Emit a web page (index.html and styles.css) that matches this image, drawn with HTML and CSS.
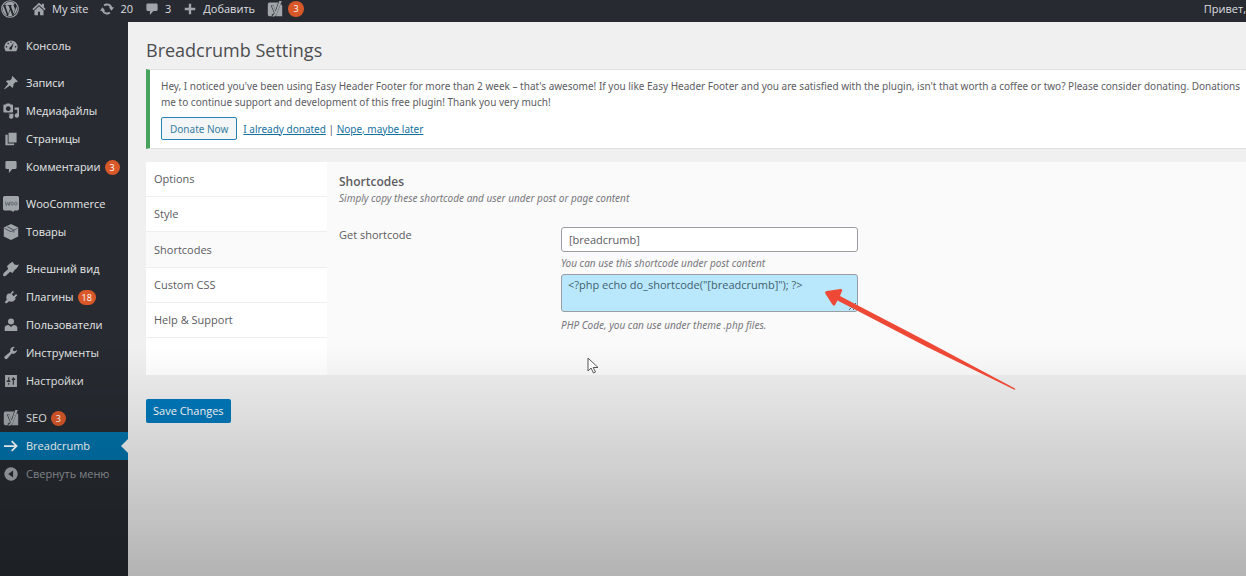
FILE: index.html
```html
<!DOCTYPE html>
<html lang="ru">
<head>
<meta charset="utf-8">
<title>Breadcrumb Settings</title>
<link rel="stylesheet" href="styles.css">
</head>
<body>
<header class="adminbar">
  <a class="bar-item logo" href="#" aria-label="WordPress"><svg class="icon-wp" viewBox="0 0 20 20"><circle cx="10" cy="10" r="9.2" fill="none" stroke="currentColor" stroke-width="1.3"/><path d="M2.600 6.500 6.800 17.500Q2 15 2 10 2 8 2.600 6.500zM3.500 5.200Q6 2 10 2q3.500 0 5.600 2.200-1.800.2-1.600 2 .2 1 1 2.300.8 1.500 0 3.800l-.9 3L11 6.500l1-.1V5.500H7.500v.9l1 .1 1.300 3.500-1.800 5.500L4.900 6.500l1-.1V5.500zM10.200 11l2.500 6.600Q10 18.500 7.800 17.800zM17.200 6.300q2.300 6.700-3.300 10.600l2.500-7.200q.8-2 .8-3.400z"/></svg></a>
  <a class="bar-item site" href="#"><svg class="icon" viewBox="0 0 20 20"><path d="M10 1 .5 10l1.600 1.700L10 4.300l7.900 7.400 1.600-1.700L17 7.600V2.500h-3v2.300z"/><path d="M10 6 3.500 12v7h5v-5h3v5h5v-7z"/></svg>My site</a>
  <a class="bar-item updates" href="#"><svg class="icon" viewBox="0 0 20 20"><path d="M10 2a8 8 0 0 1 7.500 5.500H20l-3.500 5-4-5h1.800A5 5 0 0 0 6.800 6L5 4Q7 2 10 2zM3.500 7.500l4 5H5.700a5 5 0 0 0 7.500 1.500l1.800 2a8 8 0 0 1-12.500-3.500H0z"/></svg>20</a>
  <a class="bar-item comments" href="#"><svg class="icon" viewBox="0 0 20 20"><path d="M4 2h12q2 0 2 2v7q0 2-2 2h-4l-5 5.500V13H4q-2 0-2-2V4q0-2 2-2z"/></svg>3</a>
  <a class="bar-item add" href="#"><svg class="icon" viewBox="0 0 20 20"><path d="M8.300 2.500h3.400v5.800h5.800v3.400h-5.800v5.800H8.300v-5.800H2.500V8.300h5.800z"/></svg>Добавить</a>
  <a class="bar-item seo" href="#" aria-label="SEO"><svg class="icon-yoast" viewBox="0 0 20 20"><path d="M3 2h11l-3.600 10L8 5.500H4.800l4 9.500Q8 16.500 6 17v2H3q-2 0-2-2V4q0-2 2-2zM17 4q2 .5 2 2v13H10.500q1.300-1.500 2-3.500z"/><path d="M15.300 0H18.500L12 16.500Q10.500 20 7 20v-2q2-.5 2.500-3L5.800 6h2.200L10.800 13z"/></svg><span class="badge large">3</span></a>
  <a class="bar-item hello" href="#">Привет,</a>
</header>
<div class="shell">
  <nav class="sidebar">
    <ul class="menu">
      <li><a href="#"><svg class="icon" viewBox="0 0 20 20"><path fill-rule="evenodd" d="M2.500 17.500a9.500 9.500 0 1 1 15 0zM9 3.500h2v2H9zM5 5.500h2v2H5zM2.500 10h2v2h-2zM15.500 10h2v2h-2zM14 5l-5 6.500a2 2 0 1 0 2.500 1.500z"/></svg>Консоль</a></li>
    </ul>
    <ul class="menu">
      <li><a href="#"><svg class="icon" viewBox="0 0 20 20"><path d="m12 0 8 8-2.500 1-1-.3-3 3q.8 3.500-1.500 5.300l-3.500-3.500L1 19l-.7-.7L6 11 2.800 7.500Q5 5.500 8.300 6.500l3-3L11 2z"/></svg>Записи</a></li>
      <li><a href="#"><svg class="icon wide" viewBox="0 0 20 20"><path fill-rule="evenodd" d="M1.500 2h2l1-1.500h4L9.500 2h2q1 0 1 1v8q0 1-1 1h-10q-1 0-1-1V3q0-1 1-1zM6.500 4a3 3 0 1 0 .1 0z"/><path d="M14.500 5.500H20V16a2.700 2.700 0 1 1-2.200-3V8.500h-3.300zM7 13.500h6V17a2.700 2.700 0 1 1-2-2.500H7z"/></svg>Медиафайлы</a></li>
      <li><a href="#"><svg class="icon" viewBox="0 0 20 20"><path d="M6.500 1H18v14H6.500zM2 4h3.300v12.300H14.500V19H2z"/></svg>Страницы</a></li>
      <li><a href="#"><svg class="icon" viewBox="0 0 20 20"><path d="M4 1.500h12q2 0 2 2v7.500q0 2-2 2h-4l-5 5.500V13H4q-2 0-2-2V3.500q0-2 2-2z"/></svg>Комментарии<span class="badge">3</span></a></li>
    </ul>
    <ul class="menu">
      <li><a href="#"><svg class="icon wide" viewBox="0 0 20 20"><path d="M2 0h16q2 0 2 2v14q0 2-2 2h-4l-1 2-3-2H2q-2 0-2-2V2q0-2 2-2z"/><path d="m3 7 1 5 2-4 1.500 4L9 7M11.500 7.500a1.500 2 0 1 0 .1 0M16 7.500a1.500 2 0 1 0 .1 0" fill="none" stroke="#5d646b" stroke-width="1.200"/></svg>WooCommerce</a></li>
      <li><a href="#"><svg class="icon wide" viewBox="0 0 20 20"><path d="m10 0 9 4.500v11L10 20l-9-4.500v-11z"/><path d="m2 5.500 8 4 8-4M5.500 3.500l8 4v3" fill="none" stroke="#555c64" stroke-width="1.300"/></svg>Товары</a></li>
    </ul>
    <ul class="menu">
      <li><a href="#"><svg class="icon wide" viewBox="0 0 20 20"><path d="M8 3.500 12 1l2 3q2.500 1.500 6 .5-2 5-6 7.500L12 15l-3-1.500L4 18Q1.500 20 0 18q0-1.500 1-3l5.500-5L5 6.500z"/></svg>Внешний вид</a></li>
      <li><a href="#"><svg class="icon" viewBox="0 0 20 20"><path d="M12.500 1 14.300 2.800l-3.200 3.400 2.800 2.700 3.300-3.200L19 7.500l-3.300 3.500 1 1q-2.700 5.500-7.700 4.500l-2-.5-3 3q-1.800.5-3-1.500l3-3.500q-2-5 1.500-8.500l2.500-.5 1 .5z"/></svg>Плагины<span class="badge">18</span></a></li>
      <li><a href="#"><svg class="icon" viewBox="0 0 20 20"><circle cx="10" cy="5" r="4.300"/><path d="M1 18.500v-5q.5-3 5.500-3.500l3.500 3 3.500-3q5 .5 5.500 3.500v5z"/></svg>Пользователи</a></li>
      <li><a href="#"><svg class="icon" viewBox="0 0 20 20"><path d="M18.800 5.500Q18.500 9.500 15 10.800q-2 .8-4 0L5 17.800q-2 1.800-3.800.2T1.500 14.200L9 8.200Q8 4 11 2q2-1.500 4.500-.7l-3 3 .6 2.500 2.500.6z"/></svg>Инструменты</a></li>
      <li><a href="#"><svg class="icon" viewBox="0 0 20 20"><path fill-rule="evenodd" d="M1.500 1.500h17v17h-17zM6 4.500v4.800H4v2.200h5V9.300H7.600V4.500zM12.500 15.500V8.500H11V6.300h1.500V4.500h1.600v1.800H16v2.200h-1.900v7zM6 13h1.600v2.500H6z"/></svg>Настройки</a></li>
    </ul>
    <ul class="menu">
      <li><a href="#"><svg class="icon wide" viewBox="0 0 20 20"><path d="M3 2h11l-3.600 10L8 5.500H4.800l4 9.500Q8 16.500 6 17v2H3q-2 0-2-2V4q0-2 2-2zM17 4q2 .5 2 2v13H10.500q1.300-1.500 2-3.500z"/><path d="M15.300 0H18.500L12 16.500Q10.500 20 7 20v-2q2-.5 2.500-3L5.800 6h2.200L10.800 13z"/></svg>SEO<span class="badge">3</span></a></li>
      <li><a class="current" href="#"><svg class="icon" viewBox="0 0 20 20"><path d="M0 10h18M11 3l7 7-7 7" fill="none" stroke="currentColor" stroke-width="2.500"/></svg>Breadcrumb</a></li>
      <li><button class="collapse" type="button"><svg class="icon" viewBox="0 0 20 20"><path fill-rule="evenodd" d="M10 .5a9.500 9.500 0 1 0 .1 0zM13 5v10l-7-5z"/></svg>Свернуть меню</button></li>
    </ul>
  </nav>
  <main class="content">
    <h1>Breadcrumb Settings</h1>
    <section class="notice">
      <p>Hey, I noticed you've been using Easy Header Footer for more than 2 week – that's awesome! If you like Easy Header Footer and you are satisfied with the plugin, isn't that worth a coffee or two? Please consider donating. Donations<br>me to continue support and development of this free plugin! Thank you very much!</p>
      <div class="actions"><button class="donate" type="button">Donate Now</button><span><a href="#">I already donated</a> | <a href="#">Nope, maybe later</a></span></div>
    </section>
    <form class="settings">
      <div class="panel">
        <nav class="tabs">
          <a href="#">Options</a><a href="#">Style</a><a class="selected" href="#">Shortcodes</a><a href="#">Custom CSS</a><a href="#">Help &amp; Support</a>
        </nav>
        <section class="pane">
          <h2>Shortcodes</h2>
          <p class="hint">Simply copy these shortcode and user under post or page content</p>
          <div class="field">
            <label for="shortcode">Get shortcode</label>
            <div class="controls">
              <input id="shortcode" type="text" value="[breadcrumb]">
              <p class="hint">You can use this shortcode under post content</p>
              <textarea aria-label="PHP Code" spellcheck="false">&lt;?php echo do_shortcode("[breadcrumb]"); ?&gt;</textarea>
              <p class="hint">PHP Code, you can use under theme .php files.</p>
            </div>
          </div>
        </section>
      </div>
      <button class="save" type="button">Save Changes</button>
    </form>
  </main>
</div>
<div class="shade"></div>
<svg class="arrow" viewBox="0 0 192 102"><path d="M2 2 15.500 0Q18 0 17 2L15 7 32 16 105 54 190 99.500Q191 101 189 100.500L102 58 31 21 12.500 11.500 10 16Q9 18 7 15L0 4Q0 2 2 2Z" fill="#ed4936"/></svg>
<svg class="cursor" viewBox="0 0 12 17"><path d="M1 1v13l3-3 2.500 5 2-1-2.300-4.500H11z" fill="#fff" stroke="#555" stroke-width="1"/></svg>
</body>
</html>
```
FILE: styles.css
```css
* { box-sizing: border-box; }
body {
  margin: 0;
  min-height: 100vh;
  display: flex;
  flex-direction: column;
  overflow: hidden;
  background: #f0f0f1;
  color: #5c5c5f;
  font: 11px/16px "Open Sans", "Noto Sans", sans-serif;
}
h1, h2, p, ul { margin: 0; padding: 0; }
button, input, textarea { font: inherit; color: inherit; }
svg { display: block; flex: none; fill: currentColor; }
.icon { width: 14px; height: 14px; color: #a0a5aa; }
.adminbar {
  display: flex;
  align-items: center;
  height: 22px;
  padding-bottom: 4px;
  background: #272b31;
  white-space: nowrap;
}
.bar-item { display: flex; align-items: center; gap: 6px; color: #dedfe0; text-decoration: none; }
.logo { margin-left: 1px; }
.icon-wp { width: 18px; height: 18px; color: #a0a5aa; }
.icon-yoast { width: 16px; height: 16px; color: #a0a5aa; }
.site { margin-left: 13px; }
.updates, .comments, .add, .seo { margin-left: 12px; }
.seo { gap: 5px; }
.hello { margin-left: auto; }
.shell { flex: 1; display: flex; }
.sidebar {
  flex: none;
  width: 128px;
  padding-top: 10px;
  display: flex;
  flex-direction: column;
  gap: 9px;
  background: #272b31;
}
.menu { list-style: none; }
.menu a, .collapse {
  position: relative;
  display: flex;
  align-items: center;
  gap: 8px;
  width: 100%;
  height: 28px;
  padding: 0 0 0 4px;
  border: 0;
  background: none;
  color: #e6e7e8;
  text-decoration: none;
  white-space: nowrap;
}
.menu .wide { width: 16px; height: 16px; margin: 0 -1px; }
.menu .current { background: #0073aa; color: #fff; }
.current .icon { color: #fff; }
.current::after {
  content: "";
  position: absolute;
  right: 0;
  border: 7px solid transparent;
  border-right-color: #f0f0f1;
  border-left: 0;
}
.menu .collapse { color: #94989c; }
.badge {
  min-width: 15px;
  height: 15px;
  margin-left: -4px;
  padding: 0 4px;
  border-radius: 8px;
  background: #d9582a;
  color: #fff;
  font-size: 9px;
  line-height: 15px;
  text-align: center;
}
.large { min-width: 16px; height: 16px; line-height: 16px; margin: 0; }
.content { flex: 1; min-width: 0; padding: 16px 0 0 18px; }
h1 { color: #4b4d50; font-size: 18px; font-weight: 400; line-height: 24px; }
.notice {
  margin-top: 7px;
  padding: 8px 0 8px 11px;
  border: 1px solid #dfe0e2;
  border-right: 0;
  border-left: 4px solid #46a35b;
  background: #fff;
  font-family: "Noto Sans", "Open Sans", sans-serif;
  font-size: 10px;
  white-space: nowrap;
}
.actions { display: flex; align-items: center; gap: 6px; margin-top: 7px; }
.notice a { color: #16719f; }
.donate {
  height: 23px;
  padding: 0 8px;
  border: 1px solid #2583b3;
  border-radius: 2px;
  background: #f3f5f6;
  color: #387ea2;
}
.panel { display: flex; margin-top: 13px; min-height: 213px; background: #fafafb; }
.tabs { flex: none; width: 181px; background: #fff; }
.tabs a {
  display: flex;
  align-items: center;
  height: 35px;
  padding-left: 8px;
  border-bottom: 1px solid #eee;
  color: inherit;
  text-decoration: none;
}
.tabs .selected { height: 36px; background: #fafafb; }
.pane { flex: 1; padding: 12px 12px 0; }
h2 { font-size: 12px; line-height: 16px; font-weight: 600; }
.hint { color: #77777a; font-family: "Noto Sans", "Open Sans", sans-serif; font-size: 10px; font-style: italic; }
.field { display: flex; margin-top: 21px; }
.field label { width: 222px; }
.controls { width: 297px; }
.controls input, .controls textarea {
  display: block;
  width: 100%;
  border: 1px solid #9a9ea3;
  border-radius: 3px;
  background: #fff;
}
.controls input { height: 25px; padding: 0 7px; }
.controls textarea { height: 38px; padding: 2px 6px; background: #b9e8fd; color: #41606e; }
.controls .hint { padding: 3px 0; }
.controls .hint:last-child { padding-top: 5px; }
.save {
  height: 24px;
  margin-top: 24px;
  padding: 0 7px;
  border: 0;
  border-radius: 2px;
  background: #0079bb;
  color: #fff;
}
.shade {
  position: fixed;
  inset: 60% 0 0;
  background: linear-gradient(transparent, rgba(0, 0, 0, 0.25));
  pointer-events: none;
}
.arrow { position: absolute; left: 825px; top: 289px; width: 192px; height: 102px; }
.cursor { position: absolute; left: 587px; top: 357px; width: 12px; height: 17px; }
```
